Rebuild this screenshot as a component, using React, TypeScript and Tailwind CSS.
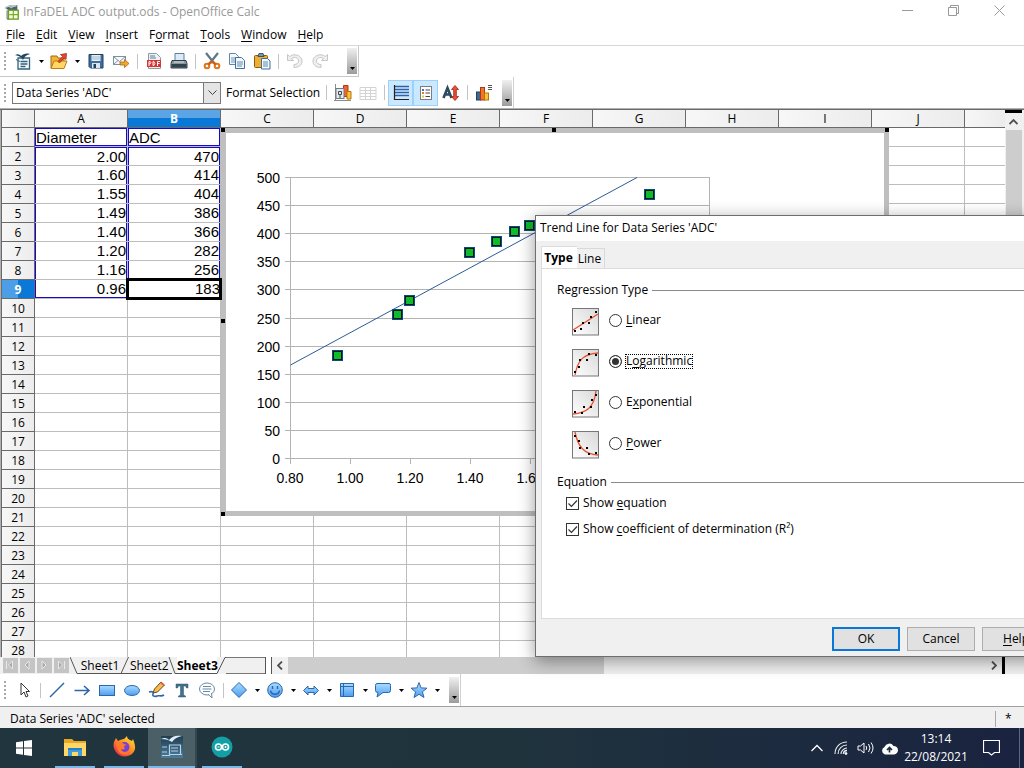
import React from "react";

const headFill = "bg-linear-to-r from-[#f7f7f7] to-[#ececec]";

function Mnemonic({ text, at = 0 }: { text: string; at?: number }) {
  return (
    <span className="whitespace-pre">
      {text.slice(0, at)}
      <span className="underline underline-offset-2">{text[at]}</span>
      {text.slice(at + 1)}
    </span>
  );
}

function Icon({ children, size = 18 }: { children: React.ReactNode; size?: number }) {
  return (
    <svg width={size} height={size} viewBox="0 0 18 18" fill="none" aria-hidden="true">
      {children}
    </svg>
  );
}

function Tool({ label, wide = true, on = false, children }: { label: string; wide?: boolean; on?: boolean; children: React.ReactNode }) {
  return (
    <button
      aria-label={label}
      className={`flex h-[26px] shrink-0 items-center justify-center ${wide ? "w-[25px]" : "w-6"} ${on ? "border border-[#99d1ff] bg-[#cce8ff]" : ""}`}
    >
      {children}
    </button>
  );
}

function Drop({ label }: { label: string }) {
  return (
    <button aria-label={label} className="flex h-[26px] w-3 shrink-0 items-center justify-center">
      <svg width="5" height="3" viewBox="0 0 5 3"><path d="M0 0h5L2.5 3z" fill="#000" /></svg>
    </button>
  );
}

const Sep = () => (
  <div className="flex w-2 shrink-0 justify-center"><div className="h-[15px] w-px bg-[#c4c4c4]" /></div>
);

const Grip = () => (
  <div className="mr-[5px] ml-1 h-[18px] w-0.5 shrink-0 bg-[repeating-linear-gradient(to_bottom,#a8a8a8_0_2px,transparent_2px_4px)]" />
);

const More = () => (
  <button aria-label="More tools" className="mr-px flex h-[26px] w-2.5 shrink-0 items-end justify-center bg-linear-to-b from-[#f0f0f0] to-[#9c9c9c] pb-1">
    <svg width="5" height="3" viewBox="0 0 5 3"><path d="M0 0h5L2.5 3z" fill="#000" /></svg>
  </button>
);

const Gradients = () => (
  <svg width="0" height="0" className="absolute" aria-hidden="true">
    <defs>
      <linearGradient id="blue" x1="0" y1="0" x2="0" y2="1">
        <stop offset="0" stopColor="#a9dcff" /><stop offset="1" stopColor="#4d9df0" />
      </linearGradient>
      <linearGradient id="pic" x1="1" y1="0" x2="0" y2="1">
        <stop offset="0" stopColor="#d8d8d8" /><stop offset="1" stopColor="#fff" />
      </linearGradient>
      <linearGradient id="fox" x1="1" y1="0" x2="0.2" y2="1">
        <stop offset="0" stopColor="#fff04a" /><stop offset="0.45" stopColor="#ff9a1e" /><stop offset="1" stopColor="#f0254f" />
      </linearGradient>
      <linearGradient id="suite" x1="0" y1="0" x2="0" y2="1">
        <stop offset="0" stopColor="#213e52" /><stop offset="1" stopColor="#4b7c9c" />
      </linearGradient>
    </defs>
  </svg>
);

function Caption() {
  return (
    <header className="flex h-6 shrink-0 items-center pl-1 text-[#999]">
      <Icon size={16}>
        <path d="M1 4c3-1 4-3 8-2l6-1v15H5V7z" fill="#4a636d" />
        <path d="M1 5c3-3 5-3 7-1 2-2 4-2 6-2" stroke="#b9ced6" strokeWidth="1.500" />
        <path d="M3.500 7v10H6" stroke="#4a5a62" />
        <rect x="5" y="7" width="11" height="10" fill="#f4fbe2" stroke="#6d9b1f" strokeWidth="1.500" />
        <path d="M6 12h10M10.500 8v9" stroke="#7aac2a" strokeWidth="1.300" />
      </Icon>
      <h1 className="ml-[3px] text-[12px]">InFaDEL ADC output.ods - OpenOffice Calc</h1>
      <div className="ml-auto flex h-full pb-1">
        <button aria-label="Minimise" className="flex w-[46px] items-center justify-center">
          <svg width="11" height="11"><path d="M0 5.500h11" stroke="#999" /></svg>
        </button>
        <button aria-label="Restore" className="flex w-[46px] items-center justify-center">
          <svg width="11" height="11" fill="none" stroke="#999"><path d="M.5 2.500h8v8h-8zM2.500 2.500v-2h8v8h-2" /></svg>
        </button>
        <button aria-label="Close" className="flex w-[46px] items-center justify-center">
          <svg width="11" height="11"><path d="M.5.5l10 10M10.500.5l-10 10" stroke="#999" /></svg>
        </button>
        <div className="w-0.5" />
      </div>
    </header>
  );
}

const menus: [string, number][] = [["File", 0], ["Edit", 0], ["View", 0], ["Insert", 0], ["Format", 1], ["Tools", 0], ["Window", 0], ["Help", 0]];

function MenuBar() {
  return (
    <nav className="flex h-[22px] shrink-0 items-center gap-[11px] border-b border-[#d8d8d8] pl-1.5">
      {menus.map(([m, at]) => (
        <button key={m}><Mnemonic text={m} at={at} /></button>
      ))}
    </nav>
  );
}

function StandardBar() {
  return (
    <div className="flex h-[31px] shrink-0">
      <div className="flex items-center border-r border-b border-[#c8c8c8]">
        <Grip />
        <Tool label="New" wide={false}>
          <Icon>
            <path d="M4 6h11.500v11H4z" fill="#f6fafd" stroke="#34627f" strokeWidth="1.300" />
            <path d="M1 3c3-1.500 5-.5 6 1 2-2 5-3 9-2-4 1-6 3-7 6-1-2-3-4-8-5z" fill="#24485e" />
            <path d="M2 7.500l4 2" stroke="#34627f" />
            <path d="M6.500 9.500h7M6.500 12h7M6.500 14.500h5" stroke="#34627f" strokeWidth="1.300" />
          </Icon>
        </Tool>
        <Drop label="New options" />
        <Tool label="Open" wide={false}>
          <Icon>
            <path d="M1 16V4h6l1 2h6v10z" fill="#f6b52b" stroke="#a0691a" />
            <path d="M1 16.500L4 9h13l-3 7.500z" fill="#ffd764" stroke="#b97d1c" />
            <path d="M8 9.500l4.500-5-2-2 6-1-.5 6-2-1.500-4.500 5z" fill="#e8492c" stroke="#8f2515" strokeWidth=".7" />
          </Icon>
        </Tool>
        <Drop label="Open options" />
        <Tool label="Save">
          <Icon>
            <path d="M2 2.500h14v13.500H3.500L2 14.500z" fill="#3f6f9c" stroke="#20415f" />
            <path d="M4.500 3h9v6h-9z" fill="#e9f1f7" /><path d="M5 5h8M5 7h8" stroke="#9fb8cc" />
            <path d="M5 11h8v5H5z" fill="#dbe6ee" /><path d="M6.500 12h2.500v4H6.500z" fill="#20415f" />
          </Icon>
        </Tool>
        <Tool label="Send by email">
          <Icon>
            <rect x="1.500" y="4.500" width="12" height="8" fill="#f8fafb" stroke="#7d929e" />
            <path d="M2 5l5.500 4.500L13 5M2 12l4-3.500" stroke="#7d929e" />
            <path d="M8 10h4.500V7.500L17 11.500l-4.500 4V13H8z" fill="#f6a52a" stroke="#a8641a" strokeWidth=".8" />
          </Icon>
        </Tool>
        <Sep />
        <Tool label="Export as PDF">
          <Icon>
            <path d="M3.500 1.500h8l4 4v11h-12z" fill="#eef2f4" stroke="#8c9ca6" />
            <path d="M5 4h5M5 6h6" stroke="#5a7c98" />
            <rect x="2" y="8" width="14" height="7" fill="#d93434" />
            <path d="M4 14V9.500h1.200q1.500 1.200 0 2.300H4M8 9.500v4h.8q2-2 0-4zM12.500 14V9.500H15M12.500 11.500h2" stroke="#fff" />
          </Icon>
        </Tool>
        <Tool label="Print">
          <Icon>
            <path d="M5 9V1.500h9V9" fill="#dcebf7" stroke="#5a7f9d" />
            <path d="M2 8.500h14l1 3v4.500H1v-4.500z" fill="#8a959c" stroke="#31404a" />
            <path d="M1.500 12h15v3.500h-15z" fill="#33434e" /><path d="M4 10h10" stroke="#d9dfe2" />
          </Icon>
        </Tool>
        <Sep />
        <Tool label="Cut">
          <Icon>
            <path d="M3 1l8 10M15 1L7 11" stroke="#5e7785" strokeWidth="2.200" />
            <circle cx="4" cy="14" r="2.300" stroke="#e2761b" strokeWidth="2" />
            <circle cx="14" cy="14" r="2.300" stroke="#e2761b" strokeWidth="2" />
            <path d="M5 12.500l4-3 4 3" stroke="#c8601b" strokeWidth="2.400" />
          </Icon>
        </Tool>
        <Tool label="Copy">
          <Icon>
            <path d="M1.500 1.500h6l3 3v8h-9z" fill="#f3f8fc" stroke="#5f87aa" /><path d="M3 6h5M3 8h5M3 10h4" stroke="#6e96ba" />
            <path d="M7.500 5.500h6l3 3v8h-9z" fill="#f3f8fc" stroke="#3f6f9c" /><path d="M9 10h6M9 12h6M9 14h5" stroke="#5c8ab4" />
          </Icon>
        </Tool>
        <Tool label="Paste">
          <Icon>
            <rect x="1.500" y="3.500" width="13" height="12" rx="1" fill="#edae32" stroke="#8a5e14" />
            <path d="M5 4.500l1-3h4l1 3z" fill="#7d98ac" stroke="#39536a" />
            <path d="M8.500 6.500h6l2.500 2.500v8H8.500z" fill="#f3f8fc" stroke="#3f6f9c" /><path d="M10 10h5M10 12h5M10 14h5" stroke="#5c8ab4" />
          </Icon>
        </Tool>
        <Sep />
        <Tool label="Undo">
          <Icon>
            <path d="M1.500 2.500v6h6L5.500 6.500c4-2.500 7 0 7 2.500s-2 3.500-4.500 3.500V15.500c5 0 8-2.500 8-6.500C16 4 9 .5 3.500 4.500z" fill="#efefef" stroke="#c6c6c6" />
          </Icon>
        </Tool>
        <Tool label="Redo">
          <Icon>
            <path d="M16.500 2.500v6h-6L12.500 6.500c-4-2.500-7 0-7 2.500s2 3.500 4.500 3.500V15.500c-5 0-8-2.500-8-6.500C2 4 9 .5 14.500 4.500z" fill="#efefef" stroke="#c6c6c6" />
          </Icon>
        </Tool>
        <div className="w-[15px]" />
        <More />
      </div>
    </div>
  );
}

function ChartBar() {
  return (
    <div className="flex h-[31px] shrink-0">
      <div className="flex items-center border-r border-[#d0d0d0]">
        <Grip />
        <div className="relative ml-px flex">
          <select aria-label="Chart element" className="h-[22px] w-[209px] appearance-none border border-[#7a7a7a] bg-white pr-5 pl-[3px] text-[12px]">
            <option>Data Series 'ADC'</option>
          </select>
          <span className="pointer-events-none absolute inset-y-0 right-0 flex w-[18px] items-center justify-center border border-[#7a7a7a] bg-[#e4e4e4]">
            <svg width="9" height="6" fill="none"><path d="M.5.5l4 4 4-4" stroke="#444" /></svg>
          </span>
        </div>
        <button className="h-[26px] w-[101px] shrink-0 pl-[5px] text-left whitespace-nowrap">Format Selection</button>
        <Sep />
        <Tool label="Chart wall">
          <Icon>
            <path d="M9.500 1.500h4.500v11H9.500z" fill="#f3622c" stroke="#ac3b12" />
            <path d="M13 7.500h4v7.500h-4z" fill="#ffc42e" stroke="#b37412" />
            <path d="M1.500 0v17M0 16.500h17" stroke="#8b8b8b" />
            <rect x="2" y="4.500" width="8" height="10" fill="#e7eaec" stroke="#6e7a84" />
            <path d="M6 11v3M4.500 7.500h3v3h-3z" stroke="#3b4a55" />
          </Icon>
        </Tool>
        <Tool label="Chart data table">
          <Icon><path d="M1 3.500h16v12H1zM1 6.500h16M1 9.500h16M1 12.500h16M6.500 3.500v12M11.500 3.500v12" stroke="#d3d3d3" /></Icon>
        </Tool>
        <Sep />
        <Tool label="Horizontal grid" on>
          <Icon><path d="M3 2.500h14M3 5.500h14M3 8.500h14M3 11.500h14" stroke="#2f62a5" strokeWidth="1.300" /><path d="M2.500 1v14.500H17" stroke="#222" strokeWidth="1.200" /></Icon>
        </Tool>
        <Tool label="Legend" on>
          <Icon>
            <rect x="3.500" y="2.500" width="11" height="13" fill="#fff" stroke="#767e85" />
            <path d="M5 5h2v2H5z" fill="#3d76b8" /><path d="M5 8h2v2H5z" fill="#e87a24" /><path d="M5 11.500h2v2H5z" fill="#f0c030" />
            <path d="M8.500 6H13M8.500 9H13M8.500 12.500H13" stroke="#444" />
          </Icon>
        </Tool>
        <Tool label="Scale text">
          <Icon>
            <path d="M1.500 14L5.500 4l4 10M3 10.500h5" stroke="#2f4a60" strokeWidth="2.600" />
            <path d="M13 1.500l3.500 4h-2.200v7h2.200l-3.500 4-3.500-4h2.200v-7H9.500z" fill="#ee4d33" stroke="#9c1f10" strokeWidth=".8" />
          </Icon>
        </Tool>
        <Sep />
        <Tool label="Automatic layout">
          <Icon>
            <rect x="1.500" y="8" width="4" height="8" fill="#42688c" stroke="#20415f" />
            <rect x="5.500" y="3.500" width="4" height="12.500" fill="#f3722c" stroke="#ac3b12" />
            <rect x="9.500" y="9" width="4" height="7" fill="#ffc42e" stroke="#b37412" />
            <path d="M13 1.500h4M13 3.500h4M13 5.500h4" stroke="#555" />
          </Icon>
        </Tool>
        <div className="w-[6px]" />
        <More />
      </div>
    </div>
  );
}

const columns = ["A", "B", "C", "D", "E", "F", "G", "H", "I", "J", ""];
const cells: Record<number, [string, string]> = {
  1: ["Diameter", "ADC"], 2: ["2.00", "470"], 3: ["1.60", "414"], 4: ["1.55", "404"], 5: ["1.49", "386"],
  6: ["1.40", "366"], 7: ["1.20", "282"], 8: ["1.16", "256"], 9: ["0.96", "183"],
};

function cellBox(row: number, col: number) {
  if (row === 9 && col === 1) return "relative z-10 text-right outline-3 -outline-offset-1 outline-black";
  if (row === 1) return "border border-[#1408cc]";
  if (row === 2) return "border-x border-t border-[#1408cc] text-right";
  if (row === 9) return "border-x border-b border-[#1408cc] text-right";
  return "border-x border-[#1408cc] text-right";
}

function Grid() {
  return (
    <table className="w-full table-fixed border-separate border-spacing-0">
      <colgroup>
        <col className="w-[33px]" />
        {columns.map((c, i) => <col key={i} className={c ? "w-[93px]" : ""} />)}
      </colgroup>
      <thead>
        <tr className="h-[18px]">
          <th className={`border-r border-b border-[#6a6a6a] p-0 ${headFill}`} />
          {columns.map((c, i) => (
            <th key={i} className={`overflow-hidden border-b border-[#6a6a6a] p-0 pt-px leading-4 ${i < 10 ? "border-r" : ""} ${c === "B" ? "bg-linear-to-b from-[#5ba5e7] from-50% to-[#0a78d7] to-50% font-bold text-white" : `font-normal ${headFill}`}`}>{c}</th>
          ))}
        </tr>
      </thead>
      <tbody>
        {Array.from({ length: 28 }, (_, r) => r + 1).map((r) => (
          <tr key={r} className="h-[19px]">
            <th className={`border-r border-b border-[#6a6a6a] p-0 pt-0.5 leading-4 ${r === 9 ? "bg-linear-to-r from-[#4c9fe6] from-50% to-[#0a78d7] to-50% font-bold text-white" : `font-normal ${headFill}`}`}>{r}</th>
            {columns.map((c, i) => (
              <td key={i} className={`border-b border-[#bdbdbd] p-0 ${i < 10 ? "border-r" : ""}`}>
                {i < 2 && cells[r] && (
                  <div className={`h-[18px] font-['Liberation_Sans',Arial,sans-serif] text-[15px] leading-[18px] ${cellBox(r, i)}`}>{cells[r][i]}</div>
                )}
              </td>
            ))}
          </tr>
        ))}
      </tbody>
    </table>
  );
}

const points: [number, number][] = [[0.96, 183], [1.16, 256], [1.2, 282], [1.4, 366], [1.49, 386], [1.55, 404], [1.6, 414], [2, 470]];
const px = (v: number) => 70.5 + (v - 0.8) * 299.5;
const py = (v: number) => Math.round(330 - v * 0.562) + 0.5;

function Chart() {
  return (
    <svg width="669" height="388" viewBox="0 0 669 388" role="img" aria-label="ADC against diameter" className="absolute top-[18px] left-[218px] font-['Liberation_Sans',Arial,sans-serif] text-[14px]">
      <rect x="3.500" y="2.500" width="663" height="383" fill="#fff" stroke="#bfbfbf" strokeWidth="5" />
      {Array.from({ length: 11 }, (_, i) => i * 50).map((v) => (
        <g key={v}>
          <path d={`M65 ${py(v)}H490`} stroke="#b3b3b3" />
          <text x="60" y={py(v) + 5} textAnchor="end">{v}</text>
        </g>
      ))}
      {["0.80", "1.00", "1.20", "1.40", "1.60"].map((v) => (
        <g key={v}>
          <path d={`M${Math.floor(px(+v)) + 0.5} 330v6`} stroke="#b3b3b3" />
          <text x={Math.floor(px(+v))} y="355" textAnchor="middle">{v}</text>
        </g>
      ))}
      <path d="M70.500 49v281M489.500 49v281" stroke="#b3b3b3" />
      <path d="M70.500 237L417 49.500" stroke="#2a5c96" />
      {points.map(([x, y]) => (
        <g key={x}>
          <rect x={Math.round(px(x)) - 6} y={py(y) - 5.5} width="11" height="11" fill="#0b4a86" />
          <rect x={Math.round(px(x)) - 4.5} y={py(y) - 4} width="8" height="8" fill="#0dbb2b" stroke="#001a12" />
        </g>
      ))}
      {[[1, 0], [332, 0], [665, 0], [1, 191], [665, 191], [1, 384], [332, 384], [665, 384]].map(([x, y]) => (
        <rect key={`${x}-${y}`} x={x} y={y} width="4" height="4" />
      ))}
    </svg>
  );
}

function Sheet() {
  return (
    <main className="flex min-h-0 flex-1 border-t border-[#6a6a6a] bg-[#b0b0b0]">
      <div className="relative ml-px min-w-0 flex-1 overflow-hidden border-l border-[#6a6a6a] bg-white">
        <Grid />
        <Chart />
      </div>
      <div className="flex w-[19px] shrink-0 flex-col bg-[#f0f0f0] pr-0.5">
        <div className="h-[3px] bg-black" />
        <button aria-label="Scroll up" className="flex h-[17px] items-center justify-center">
          <svg width="9" height="6" fill="none"><path d="M.5 5l4-4 4 4" stroke="#505050" strokeWidth="1.800" /></svg>
        </button>
        <div className="ml-px h-[200px] bg-[#cdcdcd]" />
      </div>
    </main>
  );
}

const navs: [string, string][] = [
  ["First sheet", "M3.500 3v8M9.500 3L5.500 7l4 4z"], ["Previous sheet", "M9 3L5 7l4 4z"], ["Next sheet", "M5 3l4 4-4 4z"], ["Last sheet", "M4.500 3l4 4-4 4zM10.500 3v8"],
];

const Edge = ({ d }: { d: string }) => (
  <svg width="9" height="17" viewBox="0 0 9 17" fill="none" className="shrink-0"><path d={d} stroke="#555" /></svg>
);

function TabStrip() {
  return (
    <div className="flex h-[17px] shrink-0 items-stretch bg-[#f0f0f0]">
      <div className="flex gap-0.5 pr-px pl-[3px]">
        {navs.map(([n, d]) => (
          <button key={n} aria-label={n} className="mt-px h-[15px] w-[15px] bg-[#c4c4c4]">
            <svg width="15" height="15" fill="#aaa" stroke="#e9e9e9"><path d={d} /></svg>
          </button>
        ))}
      </div>
      <div className="flex w-[196px] shrink-0 items-stretch border-r border-[#555]">
        <Edge d="M0 0l7 16.500h2" />
        <button className="w-[42px] border-b border-[#555] pt-px leading-4">Sheet1</button>
        <Edge d="M0 16.500L7.500 0M0 16.500h9" />
        <button className="w-[38px] border-b border-[#555] pt-px leading-4">Sheet2</button>
        <Edge d="M0 16.500h4M1 0l6 16.500h2" />
        <button className="w-[40px] border-b border-[#555] bg-white pt-px leading-4 font-bold">Sheet3</button>
        <Edge d="M0 16.500L8 0.500h1" />
        <div className="flex-1 border-y border-[#777]" />
      </div>
      <div className="w-[6px] border-r border-[#555] bg-white" />
      <button aria-label="Scroll left" className="flex w-4 items-center justify-center">
        <svg width="6" height="9" fill="none"><path d="M5 .5l-4 4 4 4" stroke="#505050" strokeWidth="1.800" /></svg>
      </button>
      <div className="w-[316px] bg-[#cdcdcd]" />
      <button aria-label="Scroll right" className="ml-auto flex w-4 items-center justify-center">
        <svg width="6" height="9" fill="none"><path d="M1 .5l4 4-4 4" stroke="#505050" strokeWidth="1.800" /></svg>
      </button>
      <div className="mr-[19px] w-[3px] bg-black" />
    </div>
  );
}

function DrawBar() {
  const s = "#2b66ae";
  return (
    <div className="flex h-8 shrink-0">
      <div className="flex items-center border-r border-[#d0d0d0]">
        <Grip />
        <Tool label="Select"><Icon><path d="M6 2v12l3-3 2 5 2-1-2-4.500h3.500z" fill="#fff" stroke="#333" /></Icon></Tool>
        <Sep />
        <Tool label="Line"><Icon><path d="M2 16L16 2" stroke={s} strokeWidth="1.400" /></Icon></Tool>
        <Tool label="Arrow"><Icon><path d="M1.500 9.500H15M11 5l5 4.500L11 14" stroke={s} strokeWidth="1.600" /></Icon></Tool>
        <Tool label="Rectangle"><Icon><rect x="1.500" y="4.500" width="15" height="10" fill="url(#blue)" stroke={s} /></Icon></Tool>
        <Tool label="Ellipse"><Icon><ellipse cx="9" cy="9.500" rx="7.500" ry="5" fill="url(#blue)" stroke={s} /></Icon></Tool>
        <Tool label="Freeform">
          <Icon>
            <path d="M1 11c3-1 5 0 4 2s2 3 4 2 4 1 7-1" stroke={s} strokeWidth="1.600" />
            <path d="M5 12l1.500-4L13 1l3.500 3-7 7z" fill="#f8bd45" stroke="#5a4632" /><path d="M12 2l1-1 3.500 3-1 1z" fill="#e85c55" />
          </Icon>
        </Tool>
        <Tool label="Text"><Icon><path d="M3 3h12v4h-1.500L12.500 5h-2v9l2 1v1h-7v-1l2-1V5h-2l-1 2H3z" fill="#41718f" stroke="#2e556e" strokeWidth=".5" /></Icon></Tool>
        <Tool label="Callout text"><Icon><ellipse cx="9" cy="8" rx="7.500" ry="6" fill="#fff" stroke="#688ba5" /><path d="M10 13l4 4-.5-5" fill="#fff" stroke="#688ba5" /><path d="M5 5.500h8M4.500 8h9M5 10.500h7" stroke="#688ba5" /></Icon></Tool>
        <Sep />
        <Tool label="Basic shapes" wide={false}><Icon><path d="M9 1.500L16.500 9 9 16.500 1.500 9z" fill="url(#blue)" stroke={s} /></Icon></Tool>
        <Drop label="Basic shape options" />
        <Tool label="Symbol shapes" wide={false}><Icon><circle cx="9" cy="9" r="7.300" fill="url(#blue)" stroke={s} /><path d="M6.500 5v3M11.500 5v3M4.500 9.500c1 5 8 5 9 0" stroke={s} strokeWidth="1.400" /></Icon></Tool>
        <Drop label="Symbol shape options" />
        <Tool label="Block arrows" wide={false}><Icon><path d="M1.500 9.500L6 5v2.500h6V5l4.500 4.500L12 14v-2.500H6V14z" fill="url(#blue)" stroke={s} /></Icon></Tool>
        <Drop label="Block arrow options" />
        <Tool label="Flowcharts" wide={false}><Icon><path d="M2.500 2.500h13v13h-13z" fill="url(#blue)" stroke={s} /><path d="M5.500 2.500v13M2.500 5.500h13" stroke={s} /></Icon></Tool>
        <Drop label="Flowchart options" />
        <Tool label="Callouts" wide={false}><Icon><path d="M3 2.500h12q2 0 1.500 2v5q0 2-2 2H9L3 16l1-4.500q-2.500 0-2.500-2v-5q0-2 1.500-2z" fill="url(#blue)" stroke={s} /></Icon></Tool>
        <Drop label="Callout options" />
        <Tool label="Stars" wide={false}><Icon><path d="M9 1.500l2.100 5.400 5.900.3-4.600 3.600 1.600 5.700L9 13.300 4 16.500l1.600-5.700L1 7.200l5.900-.3z" fill="url(#blue)" stroke={s} /></Icon></Tool>
        <Drop label="Star options" />
        <div className="w-[6px]" />
        <More />
      </div>
    </div>
  );
}

const fits: { name: string; at: number; d: string; dots: [number, number][] }[] = [
  { name: "Linear", at: 0, d: "M1 22L26 6", dots: [[3, 23], [9, 21], [11, 15], [17, 15], [19, 9], [24, 4]] },
  { name: "Logarithmic", at: 1, d: "M3 26C6 10 12 5 26 4", dots: [[3, 23], [7, 18], [8, 11], [15, 11], [17, 5], [24, 6]] },
  { name: "Exponential", at: 1, d: "M1 24C14 23 22 18 24 1", dots: [[3, 22], [10, 23], [12, 17], [19, 17], [20, 10], [24, 5]] },
  { name: "Power", at: 0, d: "M3 1C6 16 12 23 26 24", dots: [[3, 5], [7, 10], [8, 17], [15, 17], [17, 23], [24, 22]] },
];

function Legend({ children }: { children: string }) {
  return (
    <legend className="flex w-full items-center gap-1 leading-4">
      {children}
      <span className="h-px flex-1 bg-[#8a8a8a]" />
    </legend>
  );
}

function Check({ text, at }: { text: string; at: number }) {
  return (
    <label className="flex h-4 items-center gap-1">
      <span className="relative flex">
        <input type="checkbox" defaultChecked className="peer size-[13px] appearance-none border border-[#333] bg-white" />
        <svg width="13" height="13" fill="none" className="pointer-events-none absolute inset-0 hidden peer-checked:block"><path d="M2.500 6.500l3 3 5.500-6" stroke="#333" strokeWidth="1.200" /></svg>
      </span>
      <Mnemonic text={text} at={at} />
    </label>
  );
}

function TrendDialog() {
  return (
    <section role="dialog" aria-label="Trend Line for Data Series 'ADC'" className="absolute top-[215px] left-[535px] z-20 flex h-[442px] w-[523px] flex-col border border-[#6e6e6e] bg-[#f0f0f0] shadow-[0_4px_16px_rgba(0,0,0,0.4)]">
      <h2 className="flex h-[25px] shrink-0 items-center bg-white pb-px pl-1">Trend Line for Data Series 'ADC'</h2>
      <div role="tablist" className="flex h-[27px] shrink-0 items-end pl-[5px]">
        <button role="tab" aria-selected="true" className="h-[22px] w-9 border-t border-l border-[#dcdcdc] bg-white pr-0.5 text-center font-bold">Type</button>
        <button role="tab" aria-selected="false" className="h-5 w-7 border-t border-r border-[#d9d9d9] pr-0.5 text-center">Line</button>
      </div>
      <div className="mr-1.5 ml-[5px] flex-1 border border-[#dcdcdc] bg-white pt-[13px] pl-[15px]">
        <fieldset>
          <Legend>Regression Type</Legend>
          <div className="flex flex-col gap-[13px] pt-2.5 pl-[15px]">
            {fits.map((f) => (
              <div key={f.name} className="flex h-7 items-start">
                <svg width="27" height="28" viewBox="0 0 27 28" fill="none" aria-hidden="true">
                  <rect x=".5" y=".5" width="26" height="26.500" fill="url(#pic)" stroke="#777" />
                  <path d={f.d} stroke="#e8502e" strokeWidth="1.300" />
                  {f.dots.map(([x, y]) => <rect key={x} x={x - 1} y={y - 1} width="2" height="2" fill="#000" />)}
                </svg>
                <label className="mt-1 ml-2.5 flex h-4 items-center gap-[3px]">
                  <input type="radio" name="fit" defaultChecked={f.name === "Logarithmic"} className="size-[13px] appearance-none rounded-full border border-[#333] bg-white checked:bg-[#333] checked:shadow-[inset_0_0_0_2px_#fff]" />
                  <span className={`flex h-[15px] items-center border border-dotted ${f.name === "Logarithmic" ? "border-black" : "border-transparent"}`}><Mnemonic text={f.name} at={f.at} /></span>
                </label>
              </div>
            ))}
          </div>
        </fieldset>
        <fieldset className="mt-[15px]">
          <Legend>Equation</Legend>
          <div className="flex flex-col gap-2.5 pt-[5px] pl-[9px]">
            <Check text="Show equation" at={5} />
            <Check text="Show coefficient of determination (R²)" at={5} />
          </div>
        </fieldset>
      </div>
      <div className="flex shrink-0 justify-end gap-[7px] px-[7px] pt-2 pb-[5px]">
        <button className="h-6 w-[68px] border-2 border-[#0a78d7] bg-[#e1e1e1]">OK</button>
        <button className="h-6 w-[68px] border border-[#adadad] bg-[#e1e1e1]">Cancel</button>
        <button className="h-6 w-[68px] border border-[#adadad] bg-[#e1e1e1]"><Mnemonic text="Help" /></button>
      </div>
    </section>
  );
}

function Task({ label, active = false, children }: { label: string; active?: boolean; children: React.ReactNode }) {
  return (
    <button aria-label={label} className={`flex h-10 w-[49px] flex-col items-center ${active ? "border-r-2 border-[#34474f] bg-[#4b5f67]" : ""}`}>
      <span className="flex flex-1 items-center">{children}</span>
      <span className={`h-0.5 bg-[#76b9ed] ${active ? "w-full" : "w-10"}`} />
    </button>
  );
}

function Taskbar() {
  return (
    <footer className="flex h-10 shrink-0 items-stretch bg-linear-to-r from-[#20353e] via-[#1f333d] to-[#1a2340] text-white">
      <button aria-label="Start" className="flex w-[50px] items-center justify-center pr-0.5">
        <svg width="16" height="16" fill="#fff"><path d="M0 2.300L7 1.300V7.500H0zM8 1.100L16 0v7.500H8zM0 8.500h7v6.200l-7-1zM8 8.500h8V16l-8-1.100z" /></svg>
      </button>
      <Task label="File Explorer">
        <svg width="22" height="19">
          <path d="M0 1h8l2 2h12v15H0z" fill="#e9a824" /><path d="M0 5h22v13H0z" fill="#ffd766" /><path d="M4 10h14v8h-4v-4H8v4H4z" fill="#3f9be0" /><path d="M4 10h14v2H4z" fill="#2b7cc0" />
        </svg>
      </Task>
      <Task label="Firefox">
        <svg width="24" height="24" viewBox="0 0 24 24">
          <path d="M3 5l1-2 2 3c2-1 4-2 6-2l3-3c0 3 3 4 5 5l1-2c3 8 3 11-1 15-5 4-13 3-16-2C1 13 1 8 3 5z" fill="url(#fox)" />
          <circle cx="12.500" cy="12" r="5" fill="#7542d5" />
          <path d="M4 8c3-2 6-1 8 1l3 1c-2 0-3 1-3 2 2 2-1 3-3 2 1 4 6 5 9 1-1 6-10 6-12 0-1-2-2-5-2-7z" fill="#ff7a2a" />
        </svg>
      </Task>
      <Task label="OpenOffice Calc" active>
        <svg width="24" height="24" viewBox="0 0 24 24" fill="none">
          <path d="M1 1h22v22H1z" fill="url(#suite)" />
          <path d="M1 4c4-2 6-1 8 1 3-4 7-5 13-4-5 1-8 3-10 6C9 5 6 4 1 4z" fill="#e3edf4" />
          <path d="M9.500 10h11v9M11 13h7M11 16h7M2 12h5M2 17h5M9.500 9.500v11H2M9.500 19.500H22" stroke="#b7d2e2" strokeWidth="1.200" />
        </svg>
      </Task>
      <Task label="Arduino">
        <svg width="22" height="22" fill="none"><circle cx="11" cy="11" r="10.500" fill="#12a0a6" /><circle cx="7.500" cy="11" r="3" stroke="#fff" strokeWidth="1.600" /><circle cx="14.500" cy="11" r="3" stroke="#fff" strokeWidth="1.600" /><path d="M6.500 11h2M13.500 11h2M14.500 10v2" stroke="#fff" /></svg>
      </Task>
      <div className="ml-auto flex items-center">
        <button aria-label="Hidden icons" className="flex w-6 justify-center"><svg width="12" height="8" fill="none"><path d="M.5 7L6 1.500 11.500 7" stroke="#fff" strokeWidth="1.300" /></svg></button>
        <button aria-label="Network" className="flex w-6 justify-center">
          <svg width="14" height="14" fill="none" stroke="#e8edf0"><path d="M1 13C1 6 6 1 13 1M4 13C4 8 8 4 13 4M7 13c0-3 3-6 6-6" strokeWidth="1.100" /><path d="M9.500 13c0-2 1.500-3.500 3.500-3.500" strokeWidth="1.500" /><circle cx="12" cy="12.500" r="1" fill="#fff" /></svg>
        </button>
        <button aria-label="Volume" className="flex w-6 justify-center">
          <svg width="17" height="14" fill="none" stroke="#fff"><path d="M1 5h2.500L7 2v10L3.500 9H1zM9 5q1.500 2 0 4M11.500 3q3 4 0 8M14 1.500q4 5.500 0 11" /></svg>
        </button>
        <button aria-label="Cloud backup" className="flex w-6 justify-center">
          <svg width="17" height="13"><path d="M4 12.500a4 4 0 01-.5-7.500A5 5 0 0112.500 4a4 4 0 01.5 8.500z" fill="#fff" /><path d="M8.500 10.500V6M6 8l2.500-2.500L11 8" stroke="#1b2c3e" strokeWidth="1.700" fill="none" /></svg>
        </button>
        <div className="w-[70px] text-center leading-[18px]"><div>13:14</div><div>22/08/2021</div></div>
        <button aria-label="Notifications" className="flex w-10 justify-center">
          <svg width="17" height="16" fill="none"><path d="M.5.5h16v12h-5L8.500 15l-3-2.500h-5z" stroke="#fff" strokeWidth="1.200" /></svg>
        </button>
        <div className="ml-2 h-full w-[5px] border-l border-[#5d6880]" />
      </div>
    </footer>
  );
}

export default function App() {
  return (
    <div className="relative flex h-screen flex-col overflow-hidden bg-white font-['Open_Sans','Noto_Sans',sans-serif] text-[12px] leading-4 text-black">
      <Gradients />
      <Caption />
      <MenuBar />
      <StandardBar />
      <ChartBar />
      <div className="h-px shrink-0 bg-[#b0b0b0]" />
      <Sheet />
      <TabStrip />
      <DrawBar />
      <div className="flex h-[22px] shrink-0 items-center border-t border-[#a0a0a0] bg-[#f0f0f0] pt-0.5 pl-2.5">
        <span>Data Series 'ADC' selected</span>
        <span className="ml-auto h-4 w-[29px] border-l border-[#a8a8a8] pl-[9px]">*</span>
      </div>
      <Taskbar />
      <TrendDialog />
    </div>
  );
}
